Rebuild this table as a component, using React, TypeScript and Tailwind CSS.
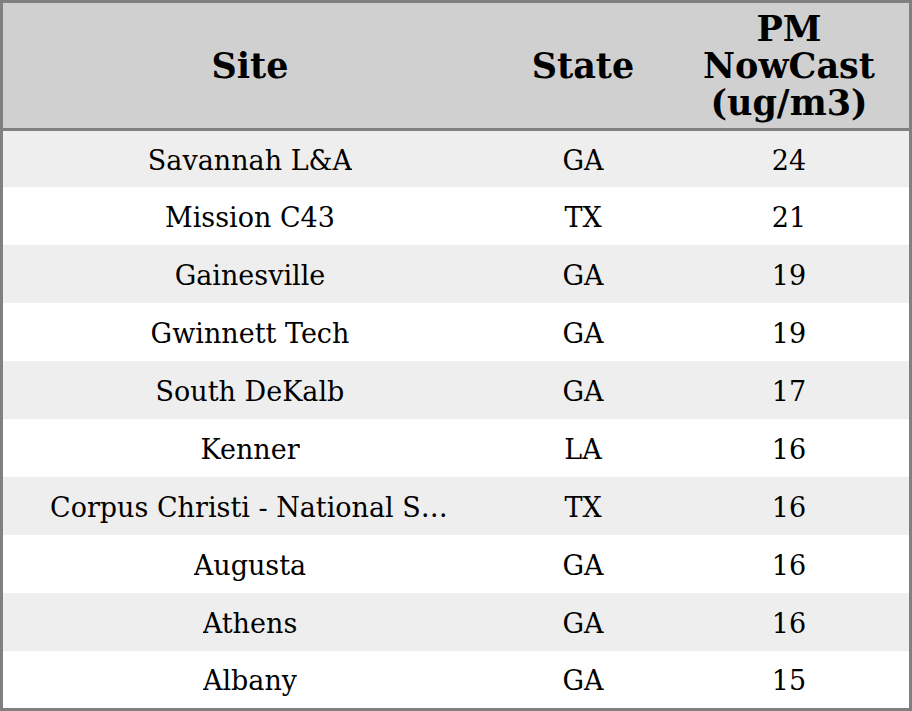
import React from "react";

const rows: [string, string, string][] = [
  ["Savannah L&A", "GA", "24"],
  ["Mission C43", "TX", "21"],
  ["Gainesville", "GA", "19"],
  ["Gwinnett Tech", "GA", "19"],
  ["South DeKalb", "GA", "17"],
  ["Kenner", "LA", "16"],
  ["Corpus Christi - National Seashore", "TX", "16"],
  ["Augusta", "GA", "16"],
  ["Athens", "GA", "16"],
  ["Albany", "GA", "15"],
];

export default function App() {
  return (
    <div
      className="w-[912px] h-[711px] border-[3px] border-[#808080] bg-white flex flex-col text-black"
      style={{ fontFamily: "'DejaVu Serif', serif" }}
    >
      <div className="h-[128px] shrink-0 bg-[#d0d0d0] border-b-[3px] border-[#808080] grid grid-cols-[494px_172px_1fr] items-center font-bold text-[35px] leading-[37px]">
        <div className="text-center">Site</div>
        <div className="text-center">State</div>
        <div className="text-center">
          PM
          <br />
          NowCast
          <br />
          (ug/m3)
        </div>
      </div>
      <div className="flex-1 flex flex-col">
        {rows.map((r, i) => (
          <div
            key={i}
            className={`grid grid-cols-[494px_172px_1fr] items-center pt-[4px] text-[27px] ${
              i === 0 ? "h-[56px]" : i === rows.length - 1 ? "flex-1" : "h-[58px]"
            } ${i % 2 === 0 ? "bg-[#eeeeee]" : "bg-white"}`}
          >
            <div className="flex justify-center">
              <div className="max-w-[400px] truncate">{r[0]}</div>
            </div>
            <div className="text-center">{r[1]}</div>
            <div className="text-center">{r[2]}</div>
          </div>
        ))}
      </div>
    </div>
  );
}
